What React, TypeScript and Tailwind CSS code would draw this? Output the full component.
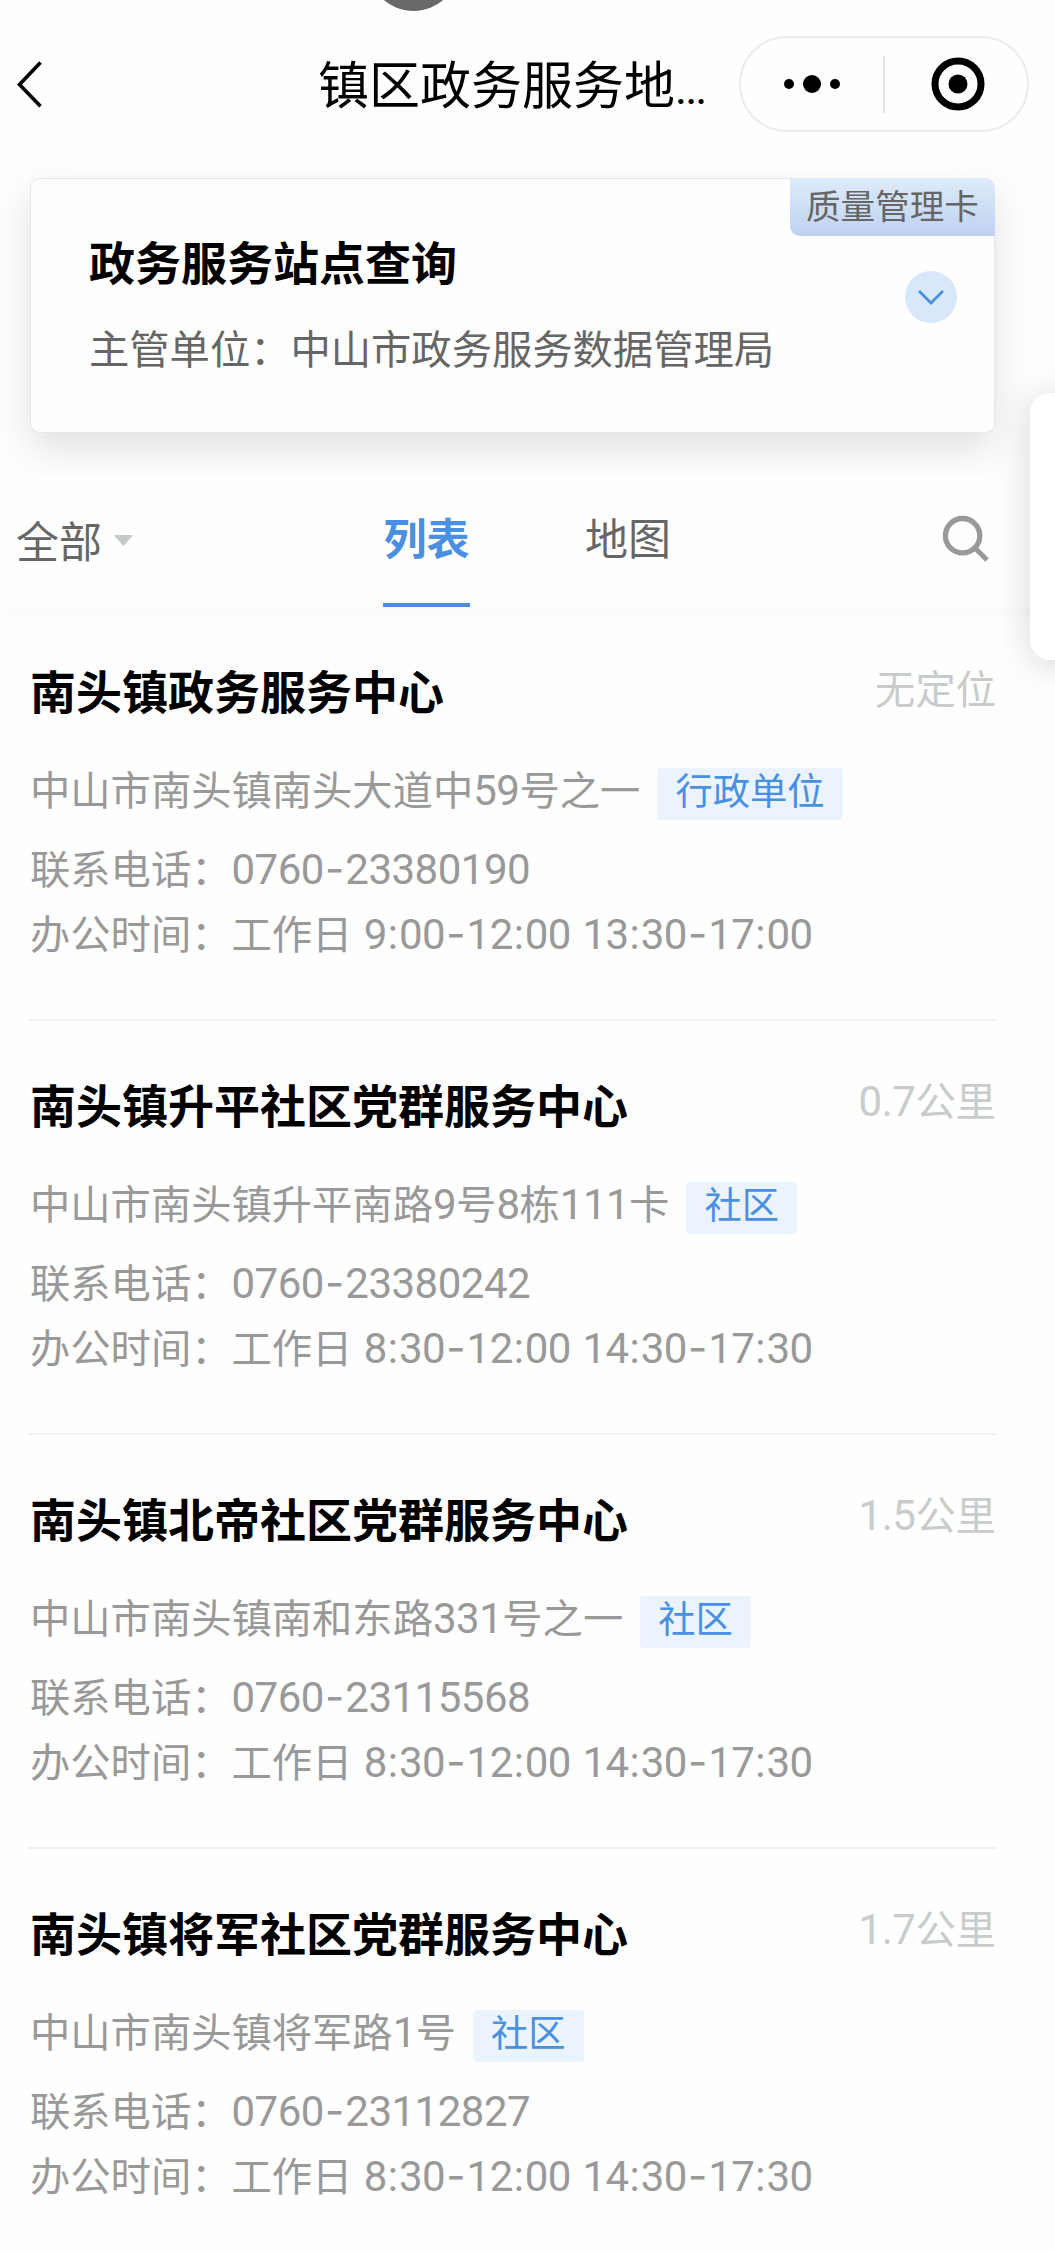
import React from 'react'

type Site = {
  name: string
  distance: string
  address: string
  tag: string
  phone: string
  hours: string
}

const sites: Site[] = [
  {
    name: '南头镇政务服务中心',
    distance: '无定位',
    address: '中山市南头镇南头大道中59号之一',
    tag: '行政单位',
    phone: '0760-23380190',
    hours: '工作日 9:00-12:00 13:30-17:00',
  },
  {
    name: '南头镇升平社区党群服务中心',
    distance: '0.7公里',
    address: '中山市南头镇升平南路9号8栋111卡',
    tag: '社区',
    phone: '0760-23380242',
    hours: '工作日 8:30-12:00 14:30-17:30',
  },
  {
    name: '南头镇北帝社区党群服务中心',
    distance: '1.5公里',
    address: '中山市南头镇南和东路331号之一',
    tag: '社区',
    phone: '0760-23115568',
    hours: '工作日 8:30-12:00 14:30-17:30',
  },
  {
    name: '南头镇将军社区党群服务中心',
    distance: '1.7公里',
    address: '中山市南头镇将军路1号',
    tag: '社区',
    phone: '0760-23112827',
    hours: '工作日 8:30-12:00 14:30-17:30',
  },
]

// Numbers use a Latin face, dashes and colons are spaced a bit wider
function Mixed({ text }: { text: string }) {
  return (
    <span className="[word-spacing:2.4px]">
      {text.split(/([\d.]+|-|:)/).map((part, i) => {
        if (/^[\d.]+$/.test(part)) {
          return (
            <span key={i} className="font-['Roboto'] text-[42px] tracking-[-0.5px]">
              {part}
            </span>
          )
        }
        if (part === '-') {
          return (
            <span key={i} className="inline-block w-[21.400px] text-center font-['Inter'] text-[42px]">
              {part}
            </span>
          )
        }
        if (part === ':') {
          return (
            <span key={i} className="inline-block w-[12px] text-center font-['Roboto'] text-[42px]">
              {part}
            </span>
          )
        }
        return <React.Fragment key={i}>{part}</React.Fragment>
      })}
    </span>
  )
}

function Header() {
  return (
    <header className="relative flex h-[178px] items-start">
      <div className="absolute left-[368px] top-[-80px] size-[91px] rounded-full bg-[#686868]" />
      <svg className="ml-[14px] mt-[60px] h-[50px] w-[30px]" viewBox="0 0 30 50" fill="none">
        <path d="M26.500 2.500 5.500 24.400 26.500 46.300" stroke="#000" strokeWidth="3.600" />
      </svg>
      <h1 className="ml-[274px] mt-[46px] w-[400px] whitespace-nowrap text-[51px] leading-[72px] text-black">
        镇区政务服务地<span className="font-['Roboto'] text-[46px] tracking-[-2px]">...</span>
      </h1>
      <div className="ml-[21px] mt-[36px] flex h-[96px] w-[290px] items-center rounded-full border-2 border-[#ebebeb]">
        <div className="flex w-[142px] items-center justify-center gap-[8.500px]">
          <span className="size-[10.500px] rounded-full bg-black" />
          <span className="size-[18.400px] rounded-full bg-black" />
          <span className="size-[10.500px] rounded-full bg-black" />
        </div>
        <div className="h-[57px] w-[2px] bg-[#e2e2e2]" />
        <svg className="ml-[46px] size-[54px]" viewBox="0 0 54 54">
          <circle cx="27" cy="27" r="23" fill="none" stroke="#000" strokeWidth="7" />
          <circle cx="27" cy="27" r="9.500" fill="#000" />
        </svg>
      </div>
    </header>
  )
}

function InfoCard() {
  return (
    <section className="ml-[30px] flex h-[255px] w-[965px] justify-between rounded-[10px] border border-[#e6e6e6] bg-[#fefefe] shadow-[0_16px_40px_rgba(0,0,0,0.12)]">
      <div className="pl-[58px] pt-[48px]">
        <h2 className="text-[46px] font-bold leading-[66px] text-black">政务服务站点查询</h2>
        <p className="mt-[25px] text-[40.300px] leading-[58px] text-[#666]">主管单位：中山市政务服务数据管理局</p>
      </div>
      <div className="flex flex-col items-end">
        <div className="-mr-px -mt-px h-[58px] w-[205px] rounded-bl-[10px] rounded-tr-[10px] bg-gradient-to-b from-[#deebf9] to-[#bed2f0] pl-[16px] text-[34.600px] leading-[52px] text-[#666]">
          质量管理卡
        </div>
        <div className="mr-[37px] mt-[35px] flex size-[52px] items-center justify-center rounded-full bg-[#d7e8fb]">
          <svg className="size-[28px]" viewBox="0 0 28 28" fill="none">
            <path d="M2 8 14 20 26 8" stroke="#4a90e2" strokeWidth="2.800" />
          </svg>
        </div>
      </div>
    </section>
  )
}

function FilterBar() {
  return (
    <nav className="mt-[42px] flex h-[132px] items-start bg-[#fefefe] text-[43px] leading-[62px] text-[#666] shadow-[0_8px_16px_rgba(0,0,0,0.02)]">
      <div className="ml-[16px] mt-[33px] flex w-[367px] items-center">
        全部
        <svg className="ml-[12px] mt-[3px] h-[11px] w-[19px]" viewBox="0 0 18 11">
          <path d="M1 0h16q2 0 .5 1.500L9 11 .5 1.500Q-1 0 1 0Z" fill="#c5cac9" />
        </svg>
      </div>
      <div className="flex h-[132px] w-[87px] flex-col items-center justify-between pt-[30px] font-bold text-[#4a90e2]">
        列表
        <span className="h-[4px] w-full bg-[#4a90d9]" />
      </div>
      <div className="ml-[115px] mt-[30px] w-[87px] whitespace-nowrap">地图</div>
      <svg className="ml-[268px] mt-[39px] size-[50px]" viewBox="0 0 50 50" fill="none" stroke="#999">
        <circle cx="22.600" cy="21.700" r="17.200" strokeWidth="5.300" />
        <path d="M34.500 33.500 47 46" strokeWidth="5" />
      </svg>
    </nav>
  )
}

function SiteItem({ site }: { site: Site }) {
  return (
    <li className="ml-[28px] h-[414px] w-[969px] border-b-2 border-[#f1f1f1] pl-[2px] pt-[50px] text-[40.300px] text-[#999]">
      <div className="flex h-[64px] items-center justify-between">
        <h3 className="text-[46px] font-bold leading-[64px] text-black">{site.name}</h3>
        <span className="-mt-[5px] mr-px leading-[60px] text-[#c8cccb]">
          <Mixed text={site.distance} />
        </span>
      </div>
      <div className="mt-[37px] flex h-[60px] items-start whitespace-nowrap leading-[60px]">
        <Mixed text={site.address} />
        <span className="ml-[17px] mt-[10px] h-[52px] rounded-[4px] bg-[#ebf3fd] px-[18px] text-[37.300px] leading-[43px] text-[#4a90e2]">
          {site.tag}
        </span>
      </div>
      <p className="mt-[16px] h-[65px] whitespace-nowrap leading-[65px]">
        联系电话：<Mixed text={site.phone} />
      </p>
      <p className="h-[65px] whitespace-nowrap leading-[65px]">
        办公时间：<Mixed text={site.hours} />
      </p>
    </li>
  )
}

export default function App() {
  return (
    <div className="relative h-[2251px] w-[1055px] overflow-hidden bg-[#fefefe] font-['Noto_Sans_CJK_SC',sans-serif]">
      <Header />
      <InfoCard />
      <FilterBar />
      <ul>
        {sites.map((site) => (
          <SiteItem key={site.name} site={site} />
        ))}
      </ul>
      {/* Floating drawer handle at the right edge */}
      <div className="absolute left-[1030px] top-[393px] h-[267px] w-[60px] rounded-[20px] bg-white shadow-[0_4px_36px_rgba(0,0,0,0.16)]" />
    </div>
  )
}
